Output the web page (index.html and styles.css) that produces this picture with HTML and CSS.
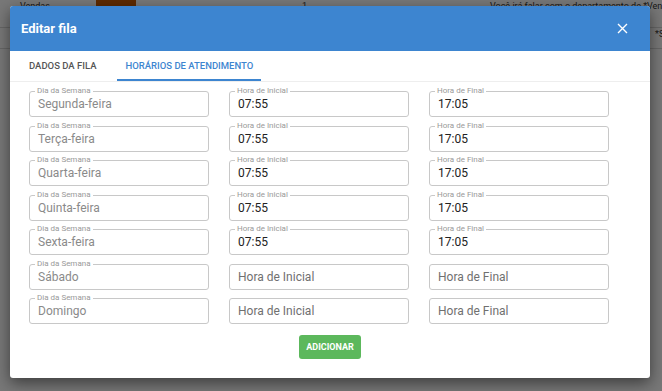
FILE: index.html
```html
<!DOCTYPE html>
<html lang="pt-BR">
<head>
    <meta charset="UTF-8">
    <meta name="viewport" content="width=device-width, initial-scale=1.0">
    <title>Editar fila</title>
    <link rel="stylesheet" href="styles.css">
</head>
<body>
    <div class="page">
        <div class="page-row first">
            <span>Vendas</span>
            <span class="swatch"></span>
            <span></span>
            <span>1</span>
            <span>Você irá falar com o departamento de *Vendas*</span>
            <span></span>
        </div>
        <div class="page-row second">
            <span></span>
            <span></span>
            <span></span>
            <span></span>
            <span></span>
            <span>*Suporte*</span>
        </div>
    </div>
    <div class="overlay"></div>

    <div class="modal">
        <div class="modal-head">
            <h2 class="modal-title">Editar fila</h2>
            <a class="modal-close" href="javascript:;">
                <svg width="11" height="11" viewBox="0 0 11 11"><path d="M1 1L10 10M10 1L1 10" stroke="#fff" stroke-width="1.4" fill="none"/></svg>
            </a>
        </div>
        <ul class="tabs">
            <li class="tab">Dados da fila</li>
            <li class="tab active">Horários de atendimento</li>
        </ul>
        <div class="form">
            <div class="form-row">
                <div class="field"><span class="field-label">Dia da Semana</span><span class="field-value day">Segunda-feira</span></div>
                <div class="field"><span class="field-label">Hora de Inicial</span><span class="field-value">07:55</span></div>
                <div class="field"><span class="field-label">Hora de Final</span><span class="field-value">17:05</span></div>
            </div>
            <div class="form-row">
                <div class="field"><span class="field-label">Dia da Semana</span><span class="field-value day">Terça-feira</span></div>
                <div class="field"><span class="field-label">Hora de Inicial</span><span class="field-value">07:55</span></div>
                <div class="field"><span class="field-label">Hora de Final</span><span class="field-value">17:05</span></div>
            </div>
            <div class="form-row">
                <div class="field"><span class="field-label">Dia da Semana</span><span class="field-value day">Quarta-feira</span></div>
                <div class="field"><span class="field-label">Hora de Inicial</span><span class="field-value">07:55</span></div>
                <div class="field"><span class="field-label">Hora de Final</span><span class="field-value">17:05</span></div>
            </div>
            <div class="form-row">
                <div class="field"><span class="field-label">Dia da Semana</span><span class="field-value day">Quinta-feira</span></div>
                <div class="field"><span class="field-label">Hora de Inicial</span><span class="field-value">07:55</span></div>
                <div class="field"><span class="field-label">Hora de Final</span><span class="field-value">17:05</span></div>
            </div>
            <div class="form-row">
                <div class="field"><span class="field-label">Dia da Semana</span><span class="field-value day">Sexta-feira</span></div>
                <div class="field"><span class="field-label">Hora de Inicial</span><span class="field-value">07:55</span></div>
                <div class="field"><span class="field-label">Hora de Final</span><span class="field-value">17:05</span></div>
            </div>
            <div class="form-row">
                <div class="field"><span class="field-label">Dia da Semana</span><span class="field-value day">Sábado</span></div>
                <div class="field"><span class="field-value empty">Hora de Inicial</span></div>
                <div class="field"><span class="field-value empty">Hora de Final</span></div>
            </div>
            <div class="form-row">
                <div class="field"><span class="field-label">Dia da Semana</span><span class="field-value day">Domingo</span></div>
                <div class="field"><span class="field-value empty">Hora de Inicial</span></div>
                <div class="field"><span class="field-value empty">Hora de Final</span></div>
            </div>
        </div>
        <div class="actions">
            <a class="btn-add" href="javascript:;">Adicionar</a>
        </div>
    </div>
</body>
</html>
```

FILE: styles.css
```css
*{
    margin: 0;
    padding: 0;
    box-sizing: border-box;
}
body{
    width: 662px;
    height: 391px;
    overflow: hidden;
    position: relative;
    background-color: #fff;
    font-family: Roboto, "Liberation Sans", sans-serif;
}
.page-row{
    display: grid;
    grid-template-columns: 76px 40px 166px 188px 165px 1fr;
    padding-left: 20px;
    font-size: 9px;
    line-height: 12px;
    color: #333;
    white-space: nowrap;
    border-bottom: 1px solid #d8d8d8;
}
.page-row.first{
    height: 28px;
}
.page-row.second{
    height: 21px;
}
.page-row .swatch{
    background-color: #c85a00;
    height: 27px;
}
.overlay{
    position: absolute;
    top: 0;
    left: 0;
    right: 0;
    bottom: 0;
    background-color: rgba(0, 0, 0, 0.53);
}
.modal{
    position: absolute;
    top: 6px;
    left: 10px;
    width: 640px;
    height: 372px;
    background-color: #fff;
    border-radius: 3px;
    overflow: hidden;
    box-shadow: 0 5px 15px rgba(0, 0, 0, 0.5);
}
.modal-head{
    height: 45px;
    background-color: #3d85d0;
    display: flex;
    align-items: center;
    justify-content: space-between;
    padding: 0 22px 0 11px;
}
.modal-title{
    color: #fff;
    font-size: 13px;
    font-weight: 700;
}
.modal-close{
    display: flex;
}
.tabs{
    list-style: none;
    display: flex;
    gap: 13px;
    height: 31px;
    padding-left: 11px;
    border-bottom: 1px solid #eee;
}
.tab{
    padding: 0 8px;
    font-size: 9.5px;
    font-weight: 500;
    text-transform: uppercase;
    color: #555;
    line-height: 30px;
}
.tab.active{
    color: #3d85d0;
    border-bottom: 2px solid #3d85d0;
}
.form{
    display: flex;
    flex-direction: column;
    gap: 8.5px;
    padding: 9px 0 0 19px;
}
.form-row{
    display: flex;
    gap: 20px;
}
.field{
    position: relative;
    width: 180px;
    height: 26px;
    border: 1px solid #c8c8c8;
    border-radius: 3px;
    display: flex;
    align-items: center;
    padding-left: 8px;
}
.field-label{
    position: absolute;
    top: -6px;
    left: 5px;
    padding: 0 2px;
    background-color: #fff;
    font-size: 8px;
    line-height: 10px;
    color: #999;
}
.field-value{
    font-size: 12px;
    color: #222;
}
.field-value.day{
    color: #8a8a8a;
}
.field-value.empty{
    color: #707070;
}
.actions{
    display: flex;
    justify-content: center;
    margin-top: 11px;
}
.btn-add{
    display: block;
    width: 62px;
    height: 24px;
    line-height: 24px;
    text-align: center;
    text-decoration: none;
    text-transform: uppercase;
    font-size: 9px;
    font-weight: 700;
    color: #fff;
    background-color: #5cb85c;
    border-radius: 3px;
}
```
